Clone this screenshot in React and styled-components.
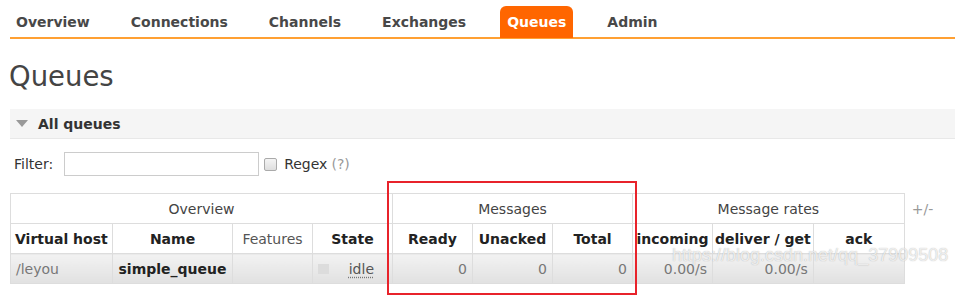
import React from 'react';
import styled, { createGlobalStyle } from 'styled-components';

const GlobalStyle = createGlobalStyle`
  html, body {
    margin: 0;
    padding: 0;
    background: #fff;
    font-family: 'DejaVu Sans', Verdana, sans-serif;
    color: #484848;
  }
`;

const Page = styled.div`
  position: relative;
  width: 955px;
  height: 302px;
  overflow: hidden;
`;

const Nav = styled.ul`
  display: flex;
  align-items: flex-end;
  list-style: none;
  margin: 0 0 0 10px;
  padding: 6px 0 0 0;
  height: 31px;
  border-bottom: 2px solid #ffa033;
`;

const NavItem = styled.li`
  box-sizing: border-box;
  height: 32px;
  margin-left: ${p => (p.first ? '-1px' : '0')};
  margin-right: 27px;
  padding: 0 7px;
  display: flex;
  align-items: center;
  font-size: 14px;
  font-weight: bold;
  color: ${p => (p.active ? '#fff' : '#484848')};
  background: ${p => (p.active ? '#ff6600' : 'transparent')};
  border-radius: 6px 6px 0 0;
  margin-bottom: -1px;
`;

const Title = styled.h1`
  margin: 20px 0 0 9px;
  font-size: 27.5px;
  font-weight: normal;
  color: #444;
  line-height: 34px;
`;

const Section = styled.div`
  margin: 16px 0 0 10px;
`;

const SectionHead = styled.div`
  display: flex;
  align-items: center;
  gap: 10px;
  height: 29px;
  padding-left: 6px;
  background: #f5f5f5;
  border-bottom: 1px solid #e8e8e8;
  font-size: 14px;
  font-weight: bold;
  color: #333;
`;

const Triangle = styled.span`
  width: 0;
  height: 0;
  border-left: 6px solid transparent;
  border-right: 6px solid transparent;
  border-top: 7px solid #999;
`;

const FilterRow = styled.div`
  display: flex;
  align-items: center;
  height: 24px;
  margin-top: 13px;
  padding-left: 4px;
  font-size: 14px;
  color: #333;
`;

const FilterInput = styled.input`
  box-sizing: border-box;
  width: 195px;
  height: 24px;
  margin: 0 5px 0 11px;
  border: 1px solid #ccc;
  padding: 0 4px;
`;

const Check = styled.span`
  box-sizing: border-box;
  width: 13px;
  height: 13px;
  margin-right: 7px;
  border: 1px solid #aaa;
  border-radius: 2px;
  background: linear-gradient(#f4f4f4, #dedede);
`;

const Help = styled.span`
  color: #999;
  margin-left: 4px;
`;

const TableRow = styled.div`
  display: flex;
  align-items: flex-start;
  margin-top: 17px;
`;

const Table = styled.table`
  border-collapse: collapse;
  table-layout: fixed;
  font-size: 14px;
  border: 1px solid #ddd;
`;

const GroupTh = styled.th`
  height: 29px;
  padding: 0 4px;
  font-weight: normal;
  color: #444;
  border: 1px solid #ddd;
  background: #fff;
`;

const ColTh = styled.th`
  height: 29px;
  padding: 0 2px 0 ${p => (p.align === 'left' ? '4px' : '2px')};
  color: ${p => (p.light ? '#555' : '#222')};
  font-weight: ${p => (p.light ? 'normal' : 'bold')};
  text-align: ${p => p.align || 'center'};
  border: 1px solid #ddd;
  background: #fff;
  white-space: nowrap;
  overflow: hidden;
`;

const Td = styled.td`
  height: 29px;
  padding: 0 5px;
  color: ${p => (p.strong ? '#222' : '#777')};
  font-weight: ${p => (p.strong ? 'bold' : 'normal')};
  text-align: ${p => p.align || 'right'};
  border: 1px solid #ddd;
  background: linear-gradient(#f2f2f2, #e1e1e1);
  white-space: nowrap;
  overflow: hidden;
`;

const StateCell = styled.div`
  display: flex;
  align-items: center;
  justify-content: space-between;
  padding-right: 13px;
`;

const Square = styled.span`
  width: 11px;
  height: 10px;
  background: #dcdcdc;
`;

const Idle = styled.abbr`
  color: #555;
  text-decoration: underline dotted #777;
  text-underline-offset: 3px;
`;

const Toggle = styled.span`
  margin: 8px 0 0 7px;
  font-size: 14px;
  color: #999;
`;

const Highlight = styled.div`
  position: absolute;
  left: 387px;
  top: 181px;
  width: 246px;
  height: 110px;
  border: 2px solid #e8232b;
  pointer-events: none;
`;

const Watermark = styled.div`
  position: absolute;
  left: 672px;
  top: 245px;
  font-family: 'Liberation Sans', Arial, sans-serif;
  font-size: 18px;
  color: rgba(255, 255, 255, 0.75);
  text-shadow: 0 0 1px rgba(120, 120, 120, 0.6);
  white-space: nowrap;
  pointer-events: none;
`;

const tabs = ['Overview', 'Connections', 'Channels', 'Exchanges', 'Queues', 'Admin'];
const widths = [102, 120, 80, 80, 80, 80, 80, 80, 100, 91];

export default function App() {
  return (
    <Page>
      <GlobalStyle />
      <Nav>
        {tabs.map((t, i) => (
          <NavItem key={t} first={i === 0} active={t === 'Queues'}>{t}</NavItem>
        ))}
      </Nav>
      <Title>Queues</Title>
      <Section>
        <SectionHead>
          <Triangle />
          All queues
        </SectionHead>
        <FilterRow>
          Filter:
          <FilterInput type="text" />
          <Check />
          Regex <Help>(?)</Help>
        </FilterRow>
        <TableRow>
          <Table>
            <colgroup>
              {widths.map((w, i) => <col key={i} style={{ width: w }} />)}
            </colgroup>
            <thead>
              <tr>
                <GroupTh colSpan={4}>Overview</GroupTh>
                <GroupTh colSpan={3}>Messages</GroupTh>
                <GroupTh colSpan={3}>Message rates</GroupTh>
              </tr>
              <tr>
                <ColTh align="left">Virtual host</ColTh>
                <ColTh>Name</ColTh>
                <ColTh light>Features</ColTh>
                <ColTh>State</ColTh>
                <ColTh>Ready</ColTh>
                <ColTh>Unacked</ColTh>
                <ColTh>Total</ColTh>
                <ColTh>incoming</ColTh>
                <ColTh>deliver / get</ColTh>
                <ColTh>ack</ColTh>
              </tr>
            </thead>
            <tbody>
              <tr>
                <Td align="left">/leyou</Td>
                <Td align="center" strong>simple_queue</Td>
                <Td />
                <Td>
                  <StateCell>
                    <Square />
                    <Idle>idle</Idle>
                  </StateCell>
                </Td>
                <Td>0</Td>
                <Td>0</Td>
                <Td>0</Td>
                <Td>0.00/s</Td>
                <Td>0.00/s</Td>
                <Td />
              </tr>
            </tbody>
          </Table>
          <Toggle>+/-</Toggle>
        </TableRow>
      </Section>
      <Highlight />
      <Watermark>https://blog.csdn.net/qq_37909508</Watermark>
    </Page>
  );
}
